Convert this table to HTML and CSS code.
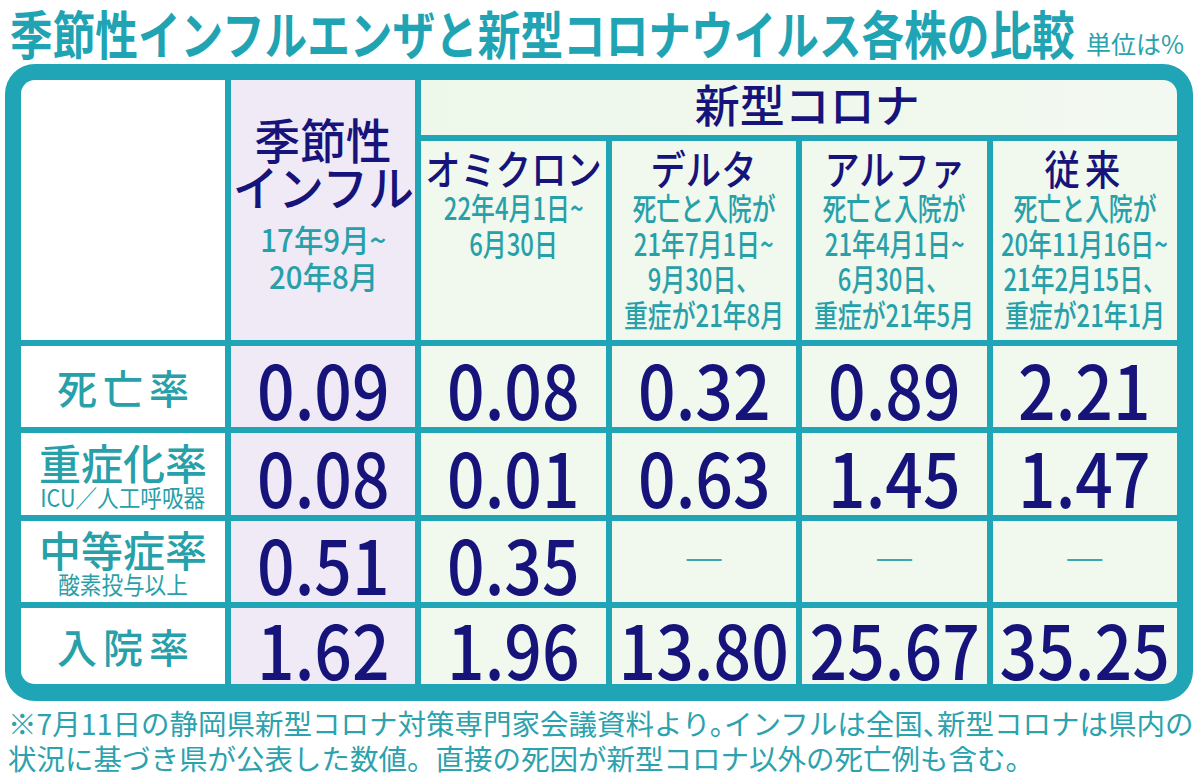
FILE: index.html
```html
<!DOCTYPE html>
<html lang="ja">
<head>
<meta charset="utf-8">
<title>季節性インフルエンザと新型コロナウイルス各株の比較</title>
<link rel="stylesheet" href="styles.css">
</head>
<body>
<div class="page">
  <header class="title-row">
    <h1 class="title"><span class="title-text">季節性インフルエンザと新型コロナウイルス各株の比較</span></h1>
    <span class="unit">単位は%</span>
  </header>

  <div class="frame">
    <div class="grid">
      <div class="cell blank span-head"></div>
      <div class="cell flu flu-head span-head">
        <span class="name big">季節性</span>
        <span class="name big">インフル</span>
        <span class="sub flu-sub">17年9月~</span>
        <span class="sub flu-sub">20年8月</span>
      </div>
      <div class="cell corona corona-head"><span class="corona-title">新型コロナ</span></div>

      <div class="cell corona variant">
        <span class="name">オミクロン</span>
        <span class="sub">22年4月1日~</span>
        <span class="sub">6月30日</span>
      </div>
      <div class="cell corona variant">
        <span class="name">デルタ</span>
        <span class="sub">死亡と入院が</span>
        <span class="sub">21年7月1日~</span>
        <span class="sub">9月30日、</span>
        <span class="sub">重症が21年8月</span>
      </div>
      <div class="cell corona variant">
        <span class="name">アルファ</span>
        <span class="sub">死亡と入院が</span>
        <span class="sub">21年4月1日~</span>
        <span class="sub">6月30日、</span>
        <span class="sub">重症が21年5月</span>
      </div>
      <div class="cell corona variant">
        <span class="name name-wide">従来</span>
        <span class="sub">死亡と入院が</span>
        <span class="sub">20年11月16日~</span>
        <span class="sub">21年2月15日、</span>
        <span class="sub">重症が21年1月</span>
      </div>

      <div class="cell label"><span class="label-main spaced">死亡率</span></div>
      <div class="cell flu"><span class="num">0.09</span></div>
      <div class="cell corona"><span class="num">0.08</span></div>
      <div class="cell corona"><span class="num">0.32</span></div>
      <div class="cell corona"><span class="num">0.89</span></div>
      <div class="cell corona"><span class="num">2.21</span></div>

      <div class="cell label">
        <span class="label-main">重症化率</span>
        <span class="label-note">ICU／人工呼吸器</span>
      </div>
      <div class="cell flu"><span class="num">0.08</span></div>
      <div class="cell corona"><span class="num">0.01</span></div>
      <div class="cell corona"><span class="num">0.63</span></div>
      <div class="cell corona"><span class="num">1.45</span></div>
      <div class="cell corona"><span class="num">1.47</span></div>

      <div class="cell label">
        <span class="label-main">中等症率</span>
        <span class="label-note">酸素投与以上</span>
      </div>
      <div class="cell flu"><span class="num">0.51</span></div>
      <div class="cell corona"><span class="num">0.35</span></div>
      <div class="cell corona"><span class="dash">—</span></div>
      <div class="cell corona"><span class="dash">—</span></div>
      <div class="cell corona"><span class="dash">—</span></div>

      <div class="cell label"><span class="label-main spaced">入院率</span></div>
      <div class="cell flu"><span class="num">1.62</span></div>
      <div class="cell corona"><span class="num">1.96</span></div>
      <div class="cell corona"><span class="num">13.80</span></div>
      <div class="cell corona"><span class="num">25.67</span></div>
      <div class="cell corona"><span class="num">35.25</span></div>
    </div>
  </div>

  <p class="note">
    <span class="note-line tight">※7月11日の静岡県新型コロナ対策専門家会議資料より。インフルは全国、新型コロナは県内の</span>
    <span class="note-line">状況に基づき県が公表した数値。直接の死因が新型コロナ以外の死亡例も含む。</span>
  </p>
</div>
</body>
</html>
```

FILE: styles.css
```css
html, body {
  margin: 0;
  padding: 0;
  background: #ffffff;
}

body {
  width: 1200px;
  height: 777px;
  overflow: hidden;
  font-family: "Noto Sans CJK JP", "Noto Sans", sans-serif;
}

.page {
  width: 1200px;
}

/* ---------- title ---------- */
.title-row {
  display: flex;
  align-items: flex-end;
  height: 64px;
  padding-left: 10px;
  box-sizing: border-box;
}

.title {
  flex: none;
  width: 1076px;
  margin: 0;
  font-size: 52px;
  font-weight: 700;
  line-height: 62px;
  color: #20a4b4;
  white-space: nowrap;
  overflow: hidden;
}

.title-text {
  display: inline-block;
  transform: scaleX(0.82);
  transform-origin: left center;
}

.unit {
  font-size: 25px;
  line-height: 34px;
  color: #2aa2ad;
  white-space: nowrap;
  padding-bottom: 4px;
}

/* ---------- frame / grid ---------- */
.frame {
  margin: 0 7px 0 5px;
  border: 16px solid #1fa5b5;
  border-bottom-width: 17px;
  border-radius: 30px;
  background: #1fa5b5;
  overflow: hidden;
}

.grid {
  display: grid;
  grid-template-columns: 204px repeat(5, 1fr);
  grid-template-rows: 55px 199px 81px 82px 81px 76px;
  gap: 6px;
}

.cell {
  display: flex;
  flex-direction: column;
  align-items: center;
  justify-content: center;
  min-width: 0;
}

.span-head {
  grid-row: 1 / span 2;
}

.blank,
.label {
  background: #ffffff;
}

.flu {
  background: #efeaf6;
}

.corona {
  background: #f1f8ee;
}

.corona-head {
  grid-column: 3 / span 4;
  padding-left: 16px;
  background: linear-gradient(90deg, #edf7ea, #f3f9f0);
}

.corona-title {
  font-size: 45px;
  font-weight: 500;
  line-height: 1;
  color: #16137a;
  margin-bottom: 8px;
}

/* header cells */
.flu-head {
  justify-content: center;
  padding-bottom: 12px;
}

.variant {
  justify-content: flex-start;
  padding-top: 4px;
}

.name,
.sub,
.label-main,
.label-note,
.num {
  display: block;
  white-space: nowrap;
  flex: none;
}

.name {
  font-size: 41px;
  font-weight: 500;
  line-height: 44px;
  color: #16137a;
  transform: scaleX(0.86);
}

.name.big {
  font-size: 48px;
  line-height: 47px;
  transform: scaleX(0.95);
}

.name-wide {
  letter-spacing: 6px;
}

.sub {
  font-size: 31px;
  font-weight: 500;
  line-height: 35.5px;
  color: #27a0a9;
  transform: scaleX(0.77);
}

.flu-sub {
  margin-top: 1px;
  transform: scaleX(0.95);
}

.flu-head .name.big + .sub {
  margin-top: 12px;
}

/* body cells */
.label-main {
  font-size: 42px;
  font-weight: 500;
  line-height: 44px;
  color: #27a0a9;
}

.label-main.spaced {
  letter-spacing: 6px;
  margin-right: -6px;
  font-size: 40px;
}

.label-note {
  font-size: 24px;
  line-height: 25px;
  color: #27a0a9;
  transform: scaleX(0.9);
}

.num {
  font-size: 75px;
  font-weight: 500;
  line-height: 1;
  color: #16137a;
  transform: scaleX(0.88);
  margin-top: 2px;
}

.dash {
  font-size: 44px;
  font-weight: 300;
  line-height: 1;
  color: #3aa9b3;
  margin-top: -18px;
}

/* ---------- footnote ---------- */
.note {
  margin: 4px 0 0;
  padding-left: 8px;
  font-size: 28.5px;
  line-height: 35px;
  color: #2ba2ad;
  white-space: nowrap;
}

.note-line {
  display: block;
}

.note-line.tight {
  font-feature-settings: "halt";
}
```
